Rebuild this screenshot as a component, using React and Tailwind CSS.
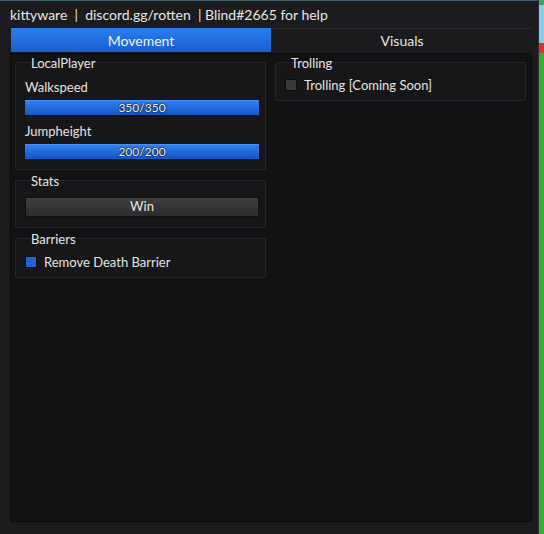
import React from "react";

const font = { fontFamily: 'Lato, "Noto Sans", sans-serif' };

function Section({ title, children, className = "" }) {
  return (
    <div className={"relative rounded-[2px] border border-[#27272b] bg-[#17171a] " + className}>
      <span className="absolute left-[14px] top-[-8px] px-[1px] text-[13px] leading-[16px] text-[#e4e4e4]">
        {title}
      </span>
      {children}
    </div>
  );
}

function Slider({ label, value }) {
  return (
    <div className="flex flex-col">
      <div className="h-[16px] text-[13px] leading-[16px] text-[#e4e4e4]">{label}</div>
      <div className="mt-[5px] h-[15px] w-[234px] flex items-center justify-center bg-gradient-to-b from-[#2f80f2] to-[#1456c4] border-t border-[#4a90f5] text-[12px] leading-[14px] text-[#f2f2f2] [text-shadow:0_0_2px_#000,0_0_1px_#000]">
        {value}
      </div>
    </div>
  );
}

export default function App() {
  return (
    <div className="w-[544px] h-[534px] flex bg-[#1b1b1e]" style={font}>
      <div className="w-[539px] h-full flex flex-col bg-[#1c1c1f] border-r border-[#2e2e32]">
        <div className="h-[27px] pl-[10px] flex items-center text-[14px] text-[#e6e6e6] whitespace-pre border-t border-[#3a5a66]">
          {"kittyware  |  discord.gg/rotten  | Blind#2665 for help"}
        </div>
        <div className="h-[26px] flex pl-[11px] pr-[6px] pt-[1px]">
          <div className="w-[260px] h-[24px] flex items-center justify-center bg-gradient-to-b from-[#2b7ef0] to-[#1a5fd0] text-[14px] text-[#f0f0f0]">
            Movement
          </div>
          <div className="flex-1 h-[24px] ml-[1px] flex items-center justify-center bg-[#1b1b1e] border-t border-[#2a2a2e] text-[14px] text-[#e6e6e6]">
            Visuals
          </div>
        </div>
        <div className="ml-[10px] w-[522px] h-[469px] bg-[#121214] border border-[#0c0c0e] flex gap-[9px] pl-[4px] pt-[8px]">
          <div className="w-[251px] flex flex-col gap-[10px]">
            <Section title="LocalPlayer" className="h-[108px] pt-[16px] pl-[9px]">
              <div className="flex flex-col gap-[8px]">
                <Slider label="Walkspeed" value="350/350" />
                <Slider label="Jumpheight" value="200/200" />
              </div>
            </Section>
            <Section title="Stats" className="h-[48px] pt-[16px] pl-[9px]">
              <div className="h-[20px] w-[234px] flex items-center justify-center bg-gradient-to-b from-[#3e3e40] to-[#2c2c2e] border border-[#111113] text-[13px] text-[#e4e4e4]">
                Win
              </div>
            </Section>
            <Section title="Barriers" className="h-[40px] pt-[16px] pl-[9px]">
              <div className="flex items-center gap-[7px] h-[13px]">
                <div className="w-[12px] h-[12px] bg-[#1f66da] border border-[#0d0d10]" />
                <span className="text-[13px] leading-[16px] text-[#e4e4e4]">Remove Death Barrier</span>
              </div>
            </Section>
          </div>
          <div className="w-[251px] flex flex-col">
            <Section title="Trolling" className="h-[39px] pt-[15px] pl-[9px]">
              <div className="flex items-center gap-[7px] h-[13px]">
                <div className="w-[12px] h-[12px] bg-[#38383b] border border-[#0d0d10]" />
                <span className="text-[13px] leading-[16px] text-[#e4e4e4]">Trolling [Coming Soon]</span>
              </div>
            </Section>
          </div>
        </div>
        <div className="flex-1" />
      </div>
      <div className="w-[5px] h-full flex flex-col">
        <div className="h-[5px] shrink-0 bg-[#3aa85a]" />
        <div className="h-[38px] shrink-0 bg-[#8ccbe6]" />
        <div className="h-[10px] shrink-0 bg-[#d83030]" />
        <div className="flex-1 bg-[#35b035]" />
      </div>
    </div>
  );
}
